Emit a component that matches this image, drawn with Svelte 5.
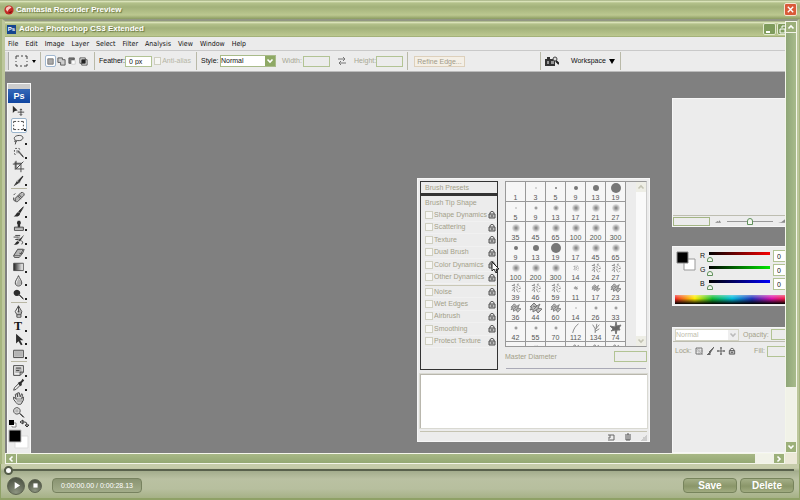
<script lang="ts">
  interface Icon {
    name: string;
    soft?: string;
    solid?: string;
    line?: string;
    more?: boolean;
  }

  const menus = ['File', 'Edit', 'Image', 'Layer', 'Select', 'Filter', 'Analysis', 'View', 'Window', 'Help'];

  const toolGroups: Icon[][] = [
    [
      {name: 'Move', solid: 'M1 2v9l2.500-2.500L7 8z', line: 'M11 6v8M7 10h8M9.500 7.500L11 6l1.500 1.500M9.500 12.500L11 14l1.500-1.500'},
      {name: 'Marquee', line: 'M2 5V3h3M7 3h2M11 3h3v2M14 7v2M14 11v2h-3M9 13H7M5 13H2v-2M2 9V7', more: true},
      {name: 'Lasso', line: 'M4 9C1 6 4 3 9 3c5 0 6 4 2 6C8 10 6 9 4 9zm0 0c-2 1 0 3 2 1M5 10l-1 4', more: true},
      {name: 'Quick selection', soft: 'M5 5h4v4H5z', line: 'M3 7V5M4 3h2M8 3l2 1M3 9l1 2M7 6l7 8M8 6l6 7', more: true},
      {name: 'Crop', line: 'M5 1v10h10M1 5h10v10M4 2v10M3 4h9M5 11l9-9'},
      {name: 'Slice', soft: 'M3 14l3-6 6-5-2 8z', solid: 'M7 9l6-7 1 1-5 7zM2 15l4-6 2 2z', line: 'M3 14l7-5', more: true}
    ],
    [
      {name: 'Healing brush', soft: 'M4 9l7-7 4 2-8 8-4 1z', line: 'M4 9l7-7q4-1 4 3l-8 8q-4 1-3-4M7 6l4 4M9 5l3 3M2 5l2-2M2 8v3l2 2', more: true},
      {name: 'Brush', solid: 'M15 2L8 8l2 2zM8 9c-3 0-2 3-6 5 5 1 8-1 8-4z', line: 'M8 8l6-6', more: true},
      {name: 'Clone stamp', soft: 'M3 10h11v3H3z', solid: 'M7 2h3l1 3-1 2v3H7V7L6 5z', line: 'M3 14V10h11v4z', more: true},
      {name: 'History brush', soft: 'M4 8l6-5v8z', solid: 'M15 2L8 9l2 1zM7 10c-2 0-2 3-5 4 4 1 6 0 7-3z', line: 'M2 5h6M4 3h6M4 8h4M11 9q4 2 1 5', more: true},
      {name: 'Eraser', soft: 'M7 4h6l-5 7H2z', line: 'M7 4h7l-5 8H2zM9 9h4l2-5M2 12l1 2h6l4-5', more: true},
      {name: 'Gradient', more: true},
      {name: 'Blur', soft: 'M8 5l4 6-3 3-4-1z', line: 'M8 2C7 5 4 8 4 11c0 5 8 5 8 0 0-3-3-6-4-9z', more: true},
      {name: 'Dodge', solid: 'M6 2a4 4 0 1 0 .1 0z', line: 'M8 8l6 6M9 8l5 5', more: true}
    ],
    [
      {name: 'Pen', soft: 'M8 3l4 6-2 4H6z', line: 'M8 1v8M8 1L4 8l2 4h5l1-4zM6 12v3h5v-3M7 8h2', more: true},
      {name: 'Type', more: true},
      {name: 'Path selection', solid: 'M5 1v12l3-3 3 5 2-1-3-5h4z', more: true},
      {name: 'Rectangle', soft: 'M3 5h10v7H3z', line: 'M2 4h12v9H2z', more: true}
    ],
    [
      {name: 'Notes', soft: 'M4 4h8v7H4z', line: 'M2 2h12v8l-4 4H2zM14 10h-4v4M5 5h6M5 8h4', more: true},
      {name: 'Eyedropper', solid: 'M9 5l2-1 2-3 2 2-3 3v3l-2 1-3-4z', line: 'M9 6l-6 6-1 3 3-1 6-6', more: true},
      {name: 'Hand', soft: 'M5 7h8v6H6z', line: 'M5 13L2 9V6l3 3-1-6 2-1 1 4V1h2l1 5 2-4 1 1-1 5 2-2v4l-3 5H7z'},
      {name: 'Zoom', soft: 'M4 4h4v4H4z', line: 'M6 2a4 4 0 1 0 .1 0M9 9l5 5M10 9l5 5'}
    ]
  ];

  const dynamics = ['Shape Dynamics', 'Scattering', 'Texture', 'Dual Brush', 'Color Dynamics', 'Other Dynamics'];
  const effects = ['Noise', 'Wet Edges', 'Airbrush', 'Smoothing', 'Protect Texture'];

  // [label, kind, radius]
  const brushes: [string, string, number][] = [
    ['1', 'hard', 0], ['3', 'soft', 1], ['5', 'hard', 1], ['9', 'hard', 2], ['13', 'hard', 3], ['19', 'hard', 5],
    ['5', 'soft', 1], ['9', 'soft', 2], ['13', 'soft', 3], ['17', 'soft', 4], ['21', 'soft', 4], ['27', 'soft', 4],
    ['35', 'soft', 4], ['45', 'soft', 4], ['65', 'soft', 4], ['100', 'soft', 4], ['200', 'soft', 4], ['300', 'soft', 4],
    ['9', 'hard', 2], ['13', 'hard', 3], ['19', 'hard', 5], ['17', 'soft', 4], ['45', 'soft', 4], ['65', 'soft', 4],
    ['100', 'soft', 4], ['200', 'soft', 4], ['300', 'soft', 4], ['14', 'spatter', 3], ['24', 'spatter', 5], ['27', 'spatter', 5],
    ['39', 'spatter', 5], ['46', 'spatter', 5], ['59', 'spatter', 5], ['11', 'chalk', 2], ['17', 'chalk', 4], ['23', 'chalk', 5],
    ['36', 'chalk', 5], ['44', 'chalk', 6], ['60', 'chalk', 5], ['14', 'soft', 1], ['26', 'soft', 2], ['33', 'soft', 2],
    ['42', 'soft', 2], ['55', 'soft', 2], ['70', 'soft', 2], ['112', 'dune', 5], ['134', 'grass', 5], ['74', 'leaf', 6],
    ['', 'hard', 0], ['', 'spatter', 3], ['', 'hard', 0], ['', 'chalk', 4], ['', 'chalk', 4], ['', 'chalk', 4]
  ];

  const shapes: Record<string, string> = {
    spatter: 'M-5-3h2M-2-5v2M1-4l2-1M4-2h1M-4 0l3-1M0-2l2 2M3 1l3-1M-5 3l2-1M-2 2v3M1 3l2 2M4 4h1M-1 0l-2 2M1 1v2M-3-4l1 2M2-2l1-2',
    chalk: 'M-6-1l4-4 3 3 3-2-2 4 4 1-4 4-2-3-3 2v-3l-3 1 2-3zM-3-2l3 1M0 2l3-2M-2 1l3-3',
    dune: 'M-4 6c1-5 4-9 7-11',
    grass: 'M-1 6V1l-3-5M-1 2l5-6M0 1L1-5M-1 4L4 1',
    leaf: 'M0-6l1 4 4-1-2 3 1 2-3 0-1 4-1-4-4 1 2-2-3-3 5 1z'
  };

  const channels = ['R', 'G', 'B'];

  let seek = $state(0);
  let feather = $state('0 px');
</script>

{#snippet lock()}
  <svg class="lock" viewBox="0 0 8 9" aria-hidden="true">
    <path d="M2 4V2.500Q4 0 6 2.500V4" fill="none" stroke="#555" />
    <path d="M1 4h6v4H1z" fill="#bbb" stroke="#555" />
    <path d="M3 6h2" stroke="#444" />
  </svg>
{/snippet}

{#snippet arrow(dir: string)}
  <svg viewBox="0 0 8 8" class="arrow {dir}" aria-hidden="true">
    <path d="M1.500 5.500L4 3l2.500 2.500" fill="none" stroke="currentColor" stroke-width="1.600" />
  </svg>
{/snippet}

<div class="recorder">
  <header class="title outer">
    <svg viewBox="0 0 12 12" aria-hidden="true">
      <circle cx="6" cy="6" r="5.500" fill="#c22a25" />
      <path d="M2 5a4 4 0 0 1 7-2L6 5 4 8z" fill="#f7c9c0" />
      <path d="M5 9l5-2-2 3z" fill="#7d1410" />
    </svg>
    <h1>Camtasia Recorder Preview</h1>
    <button class="close" aria-label="Close">
      <svg viewBox="0 0 10 10"><path d="M2 2l6 6M8 2L2 8" stroke="#fff" stroke-width="1.500" /></svg>
    </button>
  </header>

  <main class="viewer">
    <section class="screen">
      <header class="title inner">
        <span class="ps">Ps</span>
        <h2>Adobe Photoshop CS3 Extended</h2>
        <button class="win" aria-label="Minimize">
          <svg viewBox="0 0 10 10"><path d="M2 8h4" stroke="#fff" stroke-width="2" /></svg>
        </button>
        <button class="win" aria-label="Restore">
          <svg viewBox="0 0 10 10"><path d="M4 4V2h5v4H7M2 5h5v4H2z" fill="none" stroke="#fff" /></svg>
        </button>
      </header>

      <nav>
        {#each menus as menu}
          <button>{menu}</button>
        {/each}
      </nav>

      <div class="options">
        <span class="grip"></span>
        <button class="preset" aria-label="Tool preset">
          <svg viewBox="0 0 22 12">
            <path d="M1 4V1h3M6 1h2M10 1h2v3M12 6v1M12 9v2H9M7 11H5M3 11H1V9M1 7V6" fill="none" stroke="#444" />
            <path d="M17 5h4l-2 3z" />
          </svg>
        </button>
        <span class="rule"></span>
        <div class="modes">
          <button class="on" aria-label="New selection"><svg viewBox="0 0 10 10"><path d="M2 2h6v6H2z" fill="#aaa" stroke="#777" /></svg></button>
          <button aria-label="Add to selection"><svg viewBox="0 0 10 10"><path d="M1 1h5v2h3v6H4V6H1z" fill="#ccc" stroke="#555" /></svg></button>
          <button aria-label="Subtract from selection"><svg viewBox="0 0 10 10"><path d="M1 1h6v2H4v4H1z" fill="#777" stroke="#555" /><path d="M4 4h4v4H4z" fill="#fff" stroke="#ccc" /></svg></button>
          <button aria-label="Intersect with selection"><svg viewBox="0 0 10 10"><path d="M1 1h6v6H1zM3 3h6v6H3z" fill="none" stroke="#555" /><path d="M3 3h4v4H3z" fill="#222" /></svg></button>
        </div>
        <span class="rule"></span>
        <label class="w-feather">Feather: <input class="box" bind:value={feather} /></label>
        <label class="anti"><input type="checkbox" disabled />Anti-alias</label>
        <span class="rule"></span>
        <label class="w-style">
          Style:
          <span class="pick">
            <select><option>Normal</option></select>
            <i>{@render arrow('down')}</i>
          </span>
        </label>
        <label class="w-size off">Width: <input class="box" disabled /></label>
        <svg class="swap" viewBox="0 0 10 10" aria-hidden="true"><path d="M1 3h7M6 1l2 2-2 2M9 7H2M4 5L2 7l2 2" fill="none" stroke="#777" /></svg>
        <label class="w-size off">Height: <input class="box" disabled /></label>
        <span class="rule"></span>
        <button class="refine" disabled>Refine Edge...</button>
        <span class="rule far"></span>
        <button class="bridge" aria-label="Go to Bridge">
          <svg viewBox="0 0 14 10">
            <path d="M0 3h2V1h3v2h5v7H0z" fill="#333" />
            <path d="M2 5h2v3H2zM6 5h3v3H6z" fill="#999" />
            <circle cx="10" cy="3" r="2" fill="#ddd" stroke="#444" />
            <path d="M11 5l3 3" stroke="#222" stroke-width="2" />
          </svg>
        </button>
        <button class="workspace">Workspace <svg viewBox="0 0 6 5"><path d="M0 0h6L3 5z" /></svg></button>
        <span class="rule"></span>
      </div>

      <div class="canvas">
        <aside class="tools">
          <span class="handle"></span>
          <span class="logo">Ps</span>
          {#each toolGroups as group}
            <div class="group" style="height: {Math.round(group.length * 13.8)}px">
              {#each group as tool}
                <button class:on={tool.name === 'Marquee'} aria-label={tool.name}>
                  {#if tool.name === 'Type'}
                    <b>T</b>
                  {:else}
                    <svg viewBox="0 0 16 16">
                      {#if tool.name === 'Gradient'}
                        <defs><linearGradient id="ramp"><stop stop-color="#222" /><stop offset="1" stop-color="#fff" /></linearGradient></defs>
                        <path d="M2 4h12v9H2z" fill="url(#ramp)" stroke="#444" />
                      {/if}
                      {#if tool.soft}<path d={tool.soft} fill="#b4b4b4" />{/if}
                      {#if tool.solid}<path d={tool.solid} fill="#2d2d2d" />{/if}
                      {#if tool.line}<path d={tool.line} fill="none" stroke="#4a4a4a" stroke-width="1.200" />{/if}
                    </svg>
                  {/if}
                  {#if tool.more}<i class="more"></i>{/if}
                </button>
              {/each}
            </div>
          {/each}
          <svg class="swatches" viewBox="0 0 22 32" aria-hidden="true">
            <path d="M5 4h3v4H4V7" fill="#fff" stroke="#888" />
            <path d="M1 1h5v5H1z" />
            <path d="M14 3h3q2 0 2 3M15 1l-3 2 3 2zM17 6h4l-2 2z" stroke="#333" fill="none" />
            <path d="M7 17h13v12H7z" fill="#fff" stroke="#ddd" />
            <path d="M1 11h12v12H1z" stroke="#bbb" />
          </svg>
        </aside>

        <section class="panel brush">
          <div class="brush-top">
            <div class="side">
              <button class="presets" disabled>Brush Presets</button>
              <div class="list">
                <span class="tip">Brush Tip Shape</span>
                {#each [dynamics, effects] as names, i}
                  <div class="checks" class:second={i === 1}>
                    {#each names as name}
                      <label><input type="checkbox" disabled />{name}{@render lock()}</label>
                    {/each}
                  </div>
                {/each}
              </div>
            </div>
            <div class="picker">
              <div class="well">
                <div class="grid">
                  {#each brushes as [label, kind, r]}
                    <button disabled aria-label="Brush {label}">
                      <svg viewBox="-7 -6 14 12">
                        {#if kind === 'hard'}
                          <circle {r} fill="#777" />
                        {:else if kind === 'soft'}
                          <circle {r} fill="url(#soft)" />
                        {:else}
                          <path
                            d={shapes[kind]}
                            transform="scale({r / 6})"
                            fill={kind === 'leaf' ? '#666' : kind === 'chalk' ? '#bbb' : 'none'}
                            stroke="#777" />
                        {/if}
                      </svg>
                      <span>{label}</span>
                    </button>
                  {/each}
                </div>
                <div class="pale-bar">
                  <button disabled aria-label="Scroll up">{@render arrow('up')}</button>
                  <button disabled aria-label="Scroll down">{@render arrow('down')}</button>
                </div>
              </div>
              <label class="diameter">Master Diameter <input class="box" disabled /></label>
              <hr />
            </div>
          </div>
          <div class="preview"></div>
          <footer>
            <svg viewBox="0 0 8 8"><path d="M1 2h6v5H1M3 2v3H1" fill="none" stroke="#666" /></svg>
            <svg viewBox="0 0 8 8"><path d="M1 2h6M2 3v4h4V3M3 1h2M4 3v4" fill="none" stroke="#555" /></svg>
            <i></i>
          </footer>
        </section>

        <section class="panel navigator">
          <div class="view"></div>
          <div class="zoom">
            <input class="box" disabled />
            <svg viewBox="0 0 8 5"><path d="M0 4h7L5 1 4 3 3 2z" fill="#888" /></svg>
            <input type="range" min="0" max="100" value="50" aria-label="Zoom" />
            <svg viewBox="0 0 8 5"><path d="M0 4h8V0L4 3z" fill="#888" /></svg>
          </div>
        </section>

        <section class="panel color">
          <svg class="fgbg" viewBox="0 0 22 24" aria-hidden="true">
            <path d="M9 9h11v11H9z" fill="#fff" stroke="#999" />
            <path d="M2 2h11v11H2z" stroke="#888" />
          </svg>
          <div class="channels">
            {#each channels as channel}
              <div class="channel {channel}">
                <label for="slide-{channel}">{channel}</label>
                <input id="slide-{channel}" type="range" min="0" max="255" value="0" />
                <input class="box" value="0" aria-label="{channel} value" />
              </div>
            {/each}
          </div>
          <div class="spectrum"></div>
        </section>

        <section class="panel layers">
          <div class="layer-row">
            <span class="pick pale">
              <select disabled aria-label="Blend mode"><option>Normal</option></select>
              <i>{@render arrow('down')}</i>
            </span>
            <label>Opacity: <input class="box" disabled /></label>
          </div>
          <div class="layer-row">
            <span class="lock-label">Lock:</span>
            <svg viewBox="0 0 8 8"><path d="M1 1l7 7M4 1v7M1 4h7" stroke="#bbb" /><path d="M1 1h6v6H1z" fill="none" stroke="#777" /></svg>
            <svg viewBox="0 0 8 8"><path d="M8 0L3 5l1 1zM4 5L1 8h3z" fill="#666" stroke="#666" /></svg>
            <svg viewBox="0 0 8 8"><path d="M4 0v8M0 4h8M3 1h2M3 7h2M1 3v2M7 3v2" stroke="#666" /></svg>
            {@render lock()}
            <label class="fill">Fill: <input class="box" disabled /></label>
          </div>
        </section>

        <svg class="cursor" viewBox="0 0 8 13" aria-hidden="true">
          <path d="M1 1v9l2-2 2 4 1-1-1-3h3z" fill="#fff" stroke="#222" />
        </svg>
      </div>
    </section>

    <div class="bar vertical">
      <button aria-label="Scroll up">{@render arrow('up')}</button>
      <span class="thumb"></span>
      <span class="gap"></span>
      <button aria-label="Scroll down">{@render arrow('down')}</button>
    </div>
    <div class="bar horizontal">
      <button aria-label="Scroll left">{@render arrow('left')}</button>
      <span class="thumb"></span>
      <span class="gap"></span>
      <button aria-label="Scroll right">{@render arrow('right')}</button>
    </div>
    <span class="corner"></span>
  </main>

  <footer class="player">
    <input class="seek" type="range" min="0" max="100" bind:value={seek} aria-label="Position" />
    <div class="controls">
      <button class="round play" aria-label="Play"><svg viewBox="0 0 10 10"><path d="M3 1l6 4-6 4z" fill="#fff" /></svg></button>
      <button class="round stop" aria-label="Stop"><svg viewBox="0 0 10 10"><path d="M2 2h6v6H2z" fill="#fff" /></svg></button>
      <output>0:00:00.00 / 0:00:28.13</output>
      <button class="pill">Save</button>
      <button class="pill">Delete</button>
    </div>
  </footer>
</div>

<svg class="defs" width="0" height="0" aria-hidden="true">
  <radialGradient id="soft">
    <stop stop-color="#777" />
    <stop offset="1" stop-color="#777" stop-opacity="0.100" />
  </radialGradient>
</svg>

<style>
  :global(body) {
    margin: 0;
  }

  * {
    box-sizing: border-box;
  }

  .recorder {
    display: flex;
    flex-direction: column;
    min-height: 100vh;
    overflow: hidden;
    background: #a6b57f;
    color: #111;
    font: 7px/10px 'Liberation Sans', sans-serif;
  }

  button,
  input,
  select {
    margin: 0;
    padding: 0;
    border: 0;
    border-radius: 0;
    background: none;
    color: inherit;
    font: inherit;
  }

  svg {
    display: block;
    flex: none;
  }

  .defs {
    position: absolute;
  }

  .title {
    display: flex;
    align-items: center;
    color: #fff;
    background: linear-gradient(#7f8f5c 0, #e6edc8 1px, #b3c18a 3px, #a2b17a 7px, #bcc890 15px, #8b9b62);
  }

  .title h1,
  .title h2 {
    flex: 1;
    margin: 0;
    font: bold 8px/12px 'Liberation Sans', sans-serif;
    text-shadow: 1px 1px 1px #66743f;
  }

  .outer {
    height: 19px;
    padding: 0 3px 0 4px;
    gap: 2px;
  }

  .outer svg {
    width: 10px;
    height: 10px;
  }

  .close {
    width: 13px;
    height: 13px;
    padding: 1px;
    border: 1px solid #f5e4d4;
    border-radius: 2px;
    background: #d95a38;
  }

  .close svg {
    width: 9px;
    height: 9px;
  }

  .viewer {
    flex: 1;
    display: grid;
    grid-template: 1fr 11px / 1fr 12px;
    margin: 0 1px 0 2px;
    border: solid #bdc79c;
    border-width: 0 2px 0 3px;
    border-top: 2px solid #929783;
  }

  .screen {
    display: flex;
    flex-direction: column;
    min-width: 0;
    overflow: hidden;
  }

  .inner {
    height: 16px;
    gap: 3px;
    padding-left: 2px;
  }

  .inner .win + .win {
    margin: 0 -5px 0 -2px;
  }

  .ps {
    width: 9px;
    height: 9px;
    background: #16458f;
    font: bold 6px/9px 'Liberation Sans', sans-serif;
    text-align: center;
  }

  .win {
    width: 13px;
    height: 12px;
    border: 1px solid #e3ead0;
    border-radius: 2px;
    background: #7f9c5c;
  }

  .win svg {
    width: 10px;
    height: 10px;
  }

  nav {
    display: flex;
    gap: 7px;
    height: 13px;
    padding-left: 3px;
    background: #ebebeb;
    font-family: 'DejaVu Sans Condensed', 'DejaVu Sans', sans-serif;
  }

  .options {
    display: flex;
    align-items: center;
    height: 22px;
    border-top: 1px solid #c9c9c9;
    border-bottom: 1px solid #bbb;
    background: #ececec;
    white-space: nowrap;
  }

  .options > * {
    flex: none;
  }

  .grip {
    width: 4px;
    height: 18px;
    border-right: 1px solid #aaa;
    background: #ddd;
  }

  .preset {
    margin-left: 6px;
  }

  .preset svg {
    width: 22px;
    height: 12px;
  }

  .rule {
    width: 1px;
    height: 18px;
    margin: 0 4px 0 5px;
    background: #b9b9a8;
  }

  .preset + .rule {
    margin-left: 3px;
  }

  .modes {
    display: flex;
  }

  .modes button {
    width: 11px;
    height: 12px;
    padding: 1px 0;
    border: 1px solid transparent;
  }

  .modes .on {
    border-color: #9fb6cf;
    border-radius: 2px;
    background: #fff;
  }

  .modes svg {
    width: 9px;
    height: 9px;
  }

  label {
    display: flex;
    align-items: center;
  }

  .options label {
    justify-content: space-between;
  }

  .box {
    width: 27px;
    height: 11px;
    padding: 0 3px;
    border: 1px solid #b2c394;
    background: #fff;
  }

  .box:disabled {
    background: #ececec;
  }

  .w-feather {
    width: 52px;
  }

  .w-style {
    width: 75px;
  }

  .w-size {
    width: 48px;
    margin-left: 6px;
  }

  .off {
    color: #a7a793;
  }

  .options .anti {
    justify-content: flex-start;
    width: 37px;
    margin-left: 3px;
    gap: 1px;
    color: #b5b5a5;
  }

  input[type='checkbox'] {
    appearance: none;
    width: 8px;
    height: 8px;
    border: 1px solid #cfcfc0;
    background: #f6f6f4;
  }

  .pick {
    display: flex;
    width: 56px;
    height: 12px;
    border: 1px solid #a9bb8a;
    background: #fff;
  }

  .pick select {
    flex: 1;
    min-width: 0;
    appearance: none;
  }

  .pick i {
    width: 10px;
    padding: 1px;
    background: #8ea965;
    color: #fff;
  }

  .arrow {
    width: 8px;
    height: 8px;
  }

  .down {
    transform: rotate(180deg);
  }

  .left {
    transform: rotate(270deg);
  }

  .right {
    transform: rotate(90deg);
  }

  .swap {
    width: 10px;
    height: 10px;
    margin: 0 1px 0 7px;
  }

  .refine {
    width: 51px;
    height: 11px;
    margin-left: 2px;
    border: 1px solid #ddd0bb;
    background: #f4efe6;
    color: #a09a88;
    line-height: 9px;
  }

  .options .far {
    margin-left: 75px;
  }

  .bridge svg {
    width: 14px;
    height: 10px;
  }

  .workspace {
    display: flex;
    align-items: center;
    gap: 3px;
    width: 43px;
    margin: 0 1px 0 12px;
  }

  .workspace svg {
    width: 6px;
    height: 5px;
  }

  .canvas {
    position: relative;
    flex: 1;
    min-height: 381px;
    padding: 11px 0 0 2px;
    overflow: hidden;
    background: #808080;
  }

  .tools {
    display: flex;
    flex-direction: column;
    width: 24px;
    height: 100%;
    border: solid #f8f8f8;
    border-width: 1px 1px 0;
    background: #ececec;
  }

  .handle {
    height: 5px;
    background: #cdcdcd;
  }

  .logo {
    height: 14px;
    margin-bottom: 1px;
    background: linear-gradient(#3568b8, #0f45a0);
    color: #fff;
    font: bold 9px/14px 'Liberation Sans', sans-serif;
    text-align: center;
  }

  .group {
    display: grid;
    grid-auto-rows: 1fr;
    margin: 0 3px;
  }

  .group + .group {
    margin-top: 1px;
    padding-top: 2px;
    border-top: 1px solid #b9b7a4;
    box-sizing: content-box;
  }

  .group button {
    display: flex;
    align-items: center;
    position: relative;
    width: 16px;
    padding-left: 1px;
  }

  .group .on {
    border: 1px solid #9bb5cc;
    border-radius: 2px;
    background: #fff;
    padding: 0;
  }

  .group svg {
    width: 13px;
    height: 13px;
  }

  .group b {
    width: 12px;
    font: bold 12px/12px 'Liberation Serif', serif;
    text-align: center;
  }

  .more {
    position: absolute;
    right: 0;
    bottom: 1px;
    border: 1px solid #222;
  }

  .swatches {
    width: 22px;
    height: 32px;
  }

  .panel {
    position: absolute;
    border: 1px solid #f6f6f6;
    background: #ececec;
  }

  .brush {
    top: 106px;
    left: 412px;
    display: flex;
    flex-direction: column;
    width: 233px;
    padding: 2px 2px 0;
    color: #a39f89;
    white-space: nowrap;
  }

  .brush-top {
    display: flex;
    gap: 7px;
    height: 190px;
    padding-bottom: 1px;
  }

  .side {
    display: flex;
    flex-direction: column;
    width: 78px;
  }

  .presets {
    height: 14px;
    padding-left: 4px;
    border: 1px solid #333;
    border-bottom-width: 2px;
    text-align: left;
  }

  .list {
    flex: 1;
    padding: 1px 1px 0 4px;
    border: 1px solid #333;
  }

  .tip {
    display: block;
    height: 12px;
    line-height: 12px;
  }

  .checks {
    display: grid;
    grid-auto-rows: 1fr;
    height: 75px;
  }

  .second {
    height: 63px;
    margin-top: 1px;
    border-top: 1px solid #c9c7b5;
  }

  .checks label {
    gap: 1px;
    border-bottom: 1px solid #f1f1f1;
  }

  .lock {
    width: 8px;
    height: 9px;
    margin-left: auto;
  }

  .picker {
    flex: 1;
    min-width: 0;
  }

  .well {
    display: flex;
    justify-content: space-between;
    height: 166px;
    border: 1px solid #999;
    border-right-color: #ccc;
    overflow: hidden;
  }

  .grid {
    display: grid;
    grid-template-columns: repeat(6, 20px);
    grid-auto-rows: 20px;
  }

  .grid button {
    display: flex;
    flex-direction: column;
    align-items: center;
    border: solid #999;
    border-width: 0 1px 1px 0;
    background: #f6f6f6;
    color: #555;
    line-height: 7px;
  }

  .grid svg {
    width: 14px;
    height: 12px;
  }

  .pale-bar {
    display: flex;
    flex-direction: column;
    justify-content: space-between;
    width: 10px;
    background: #fafafa;
    color: #c4c4b4;
  }

  .pale-bar button {
    height: 10px;
    padding: 1px;
    background: #eeeee6;
  }

  .diameter {
    justify-content: space-between;
    height: 19px;
  }

  .diameter .box {
    width: 33px;
  }

  .picker hr {
    margin: 2px 1px 0;
    border: 0;
    border-top: 1px solid #aaaab6;
  }

  .preview {
    height: 54px;
    margin-top: 3px;
    border: 1px solid #b9b7ad;
    border-width: 1px 0 0 1px;
    background: #fff;
    outline: 1px solid #d9d9d2;
  }

  footer svg {
    width: 8px;
    height: 8px;
  }

  .brush footer {
    display: flex;
    align-items: center;
    justify-content: flex-end;
    gap: 9px;
    height: 10px;
    margin-top: 3px;
    border-top: 1px solid #c5c3b2;
  }

  .brush footer i {
    width: 6px;
    height: 8px;
    background: linear-gradient(135deg, transparent 50%, #ccc 50%);
  }

  .navigator {
    top: 26px;
    left: 667px;
    right: -1px;
  }

  .view {
    height: 117px;
    border-bottom: 1px solid #bdbdb0;
  }

  .zoom {
    display: flex;
    align-items: center;
    gap: 5px;
    height: 10px;
  }

  .zoom .box {
    width: 37px;
    height: 9px;
    border-color: #a3b584;
  }

  .zoom svg {
    width: 7px;
    height: 5px;
  }

  input[type='range'] {
    appearance: none;
    min-width: 0;
    background: linear-gradient(#999, #999) center / 100% 1px no-repeat;
  }

  .zoom input[type='range'] {
    flex: 1;
    height: 9px;
  }

  input[type='range']::-webkit-slider-thumb {
    appearance: none;
    width: 6px;
    height: 7px;
    border: 1px solid #5f8f5b;
    border-radius: 3px 3px 0 0;
    background: #f3f6ef;
  }

  .color {
    top: 174px;
    left: 667px;
    right: -1px;
    display: grid;
    grid-template: 48px 9px / 25px minmax(0, 1fr);
    padding: 0 0 1px 2px;
  }

  .fgbg {
    width: 22px;
    height: 24px;
    margin-top: 3px;
  }

  .channels {
    display: grid;
    grid-template-columns: minmax(0, 1fr);
    grid-auto-rows: 14px;
    padding-top: 2px;
  }

  .channel {
    display: flex;
    align-items: center;
  }

  .channel label {
    width: 5px;
    line-height: 8px;
  }

  .channel input[type='range'] {
    flex: 1;
    align-self: flex-start;
    height: 12px;
    margin: 3px 3px 0 2px;
    background: linear-gradient(90deg, #000, #f00) 2px 0 / 100% 3px no-repeat;
  }

  .channel.G input[type='range'] {
    background-image: linear-gradient(90deg, #000, #0e0);
  }

  .channel.B input[type='range'] {
    background-image: linear-gradient(90deg, #000, #00f);
  }

  .channel input[type='range']::-webkit-slider-thumb {
    height: 5px;
    margin-top: 3px;
  }

  .channel .box {
    flex: none;
    width: 12px;
    height: 12px;
    border-right: 0;
  }

  .spectrum {
    grid-column: 1 / -1;
    background:
      linear-gradient(rgba(255, 255, 255, 0.400), transparent 40%, #000),
      linear-gradient(90deg, #e22, #fe0 18%, #1b3 34%, #0bd 52%, #23b 70%, #d1a 88%, #e24);
  }

  .layers {
    top: 255px;
    left: 667px;
    right: -1px;
    bottom: 0;
    color: #a39f89;
  }

  .layer-row {
    display: flex;
    align-items: center;
    gap: 3px;
    height: 14px;
    padding-left: 2px;
    border-bottom: 1px solid #bdbdb0;
    overflow: hidden;
  }

  .layer-row + .layer-row {
    height: 18px;
    border: 0;
  }

  .layer-row svg {
    width: 8px;
    height: 8px;
    margin: 0;
  }

  .layer-row .lock,
  .layer-row svg + svg {
    margin-left: 0;
  }

  .layer-row label {
    flex: 1;
    justify-content: space-between;
    gap: 2px;
    margin-left: 1px;
  }

  .layer-row .fill {
    justify-content: flex-end;
  }

  .layer-row .box {
    width: 18px;
    border-right: 0;
  }

  .lock-label {
    width: 17px;
  }

  .pale {
    width: 64px;
    flex: none;
    border-color: #d3d3c4;
  }

  .pale i {
    background: #eee;
    color: #bbb;
  }

  .cursor {
    position: absolute;
    top: 189px;
    left: 486px;
    width: 8px;
    height: 13px;
  }

  .bar {
    display: flex;
    background: #f1f2e8;
    border: 1px solid #f4f6ea;
    gap: 1px;
  }

  .bar button {
    flex: none;
    display: grid;
    place-items: center;
    width: 10px;
    height: 10px;
    background: #9cb07a;
    color: #fff;
  }

  .vertical {
    flex-direction: column;
  }

  .bar .arrow {
    margin: auto;
  }

  .vertical .thumb {
    flex: 357;
    background: linear-gradient(90deg, #8fa678, #a8bb8b);
  }

  .vertical .gap {
    flex: 54;
  }

  .horizontal .thumb {
    flex: 739;
    background: linear-gradient(#a8b886, #94a873);
  }

  .horizontal .gap {
    flex: 17;
  }

  .horizontal button {
    height: 9px;
  }

  .corner {
    background: #ece9d8;
  }

  .player {
    padding: 0 5px 3px 3px;
    border: solid #8fa167;
    border-width: 0 1px 2px;
    background: linear-gradient(#c6ccaa 0, #c6ccaa 4px, #a3ac8c 7px, #bac1a2 15px, #b7bf9e 25px, #a6b187);
  }

  input.seek {
    display: block;
    width: 100%;
    height: 12px;
    background: linear-gradient(#59614c, #59614c) center / 100% 2px no-repeat;
  }

  input.seek[type='range']::-webkit-slider-thumb {
    width: 9px;
    height: 9px;
    border: 2px solid #555c49;
    border-radius: 50%;
    background: #fff;
  }

  .controls {
    display: flex;
    align-items: center;
    gap: 3px;
    height: 19px;
  }

  .round {
    display: grid;
    place-items: center;
    width: 14px;
    height: 14px;
    border: 1px solid #5d6351;
    border-radius: 50%;
    background: radial-gradient(circle at 50% 90%, #8d9480, #42483a);
  }

  .play {
    width: 18px;
    height: 18px;
    margin-left: 3px;
  }

  .round svg {
    width: 9px;
    height: 9px;
  }

  .stop svg {
    width: 7px;
    height: 7px;
  }

  output {
    width: 90px;
    height: 15px;
    margin: 0 auto 0 7px;
    border: 1px solid #77825f;
    border-radius: 4px;
    background: linear-gradient(#8a9472, #a3ad8a);
    color: #fff;
    line-height: 13px;
    text-align: center;
  }

  .pill {
    width: 54px;
    height: 15px;
    border: 1px solid #77845c;
    border-radius: 4px;
    background: linear-gradient(#a4af87, #8a9669 55%, #a0ab80);
    color: #fff;
    font: bold 10px/13px 'Liberation Sans', sans-serif;
  }
</style>
